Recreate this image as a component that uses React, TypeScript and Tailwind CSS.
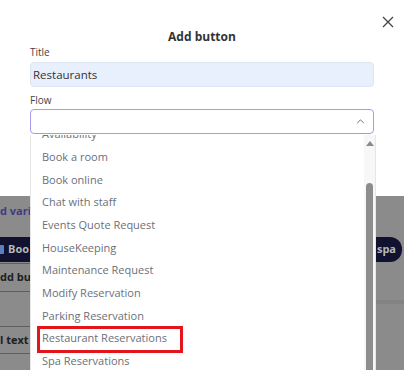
import React from "react";

const flows = [
  "Availability",
  "Book a room",
  "Book online",
  "Chat with staff",
  "Events Quote Request",
  "HouseKeeping",
  "Maintenance Request",
  "Modify Reservation",
  "Parking Reservation",
  "Restaurant Reservations",
  "Spa Reservations",
];

const App = () => {
  return (
    <div className="relative h-[370px] w-[404px] overflow-hidden bg-[#8b8b8b] font-['Open_Sans',sans-serif]">
      {/* modal */}
      <div className="relative h-[196px] bg-white px-[30px] pt-[29px]">
        <button className="absolute right-[10px] top-[16px] text-[#444]">
          <svg viewBox="0 0 12 12" className="h-[12px] w-[12px]" fill="none" stroke="currentColor" strokeWidth="1.3">
            <path d="M1 1l10 10M11 1L1 11" />
          </svg>
        </button>
        <h2 className="text-center text-[12px] font-bold leading-[16px] text-[#333]">Add button</h2>
        <div className="text-[10px] leading-[14px] text-[#444]">Title</div>
        <div className="mt-[3px] flex h-[25px] items-center rounded-[4px] border border-[#dde5f2] bg-[#e8f0fe] px-[2px] text-[11.5px] text-[#333]">
          Restaurants
        </div>
        <div className="mt-[6px] text-[10px] leading-[14px] text-[#444]">Flow</div>
        <div className="mt-[2px] flex h-[25px] items-center justify-end rounded-[4px] border border-[#a898f2] px-[8px]">
          <svg viewBox="0 0 10 6" className="h-[5px] w-[9px]" fill="none" stroke="#666" strokeWidth="1.1">
            <path d="M1 5l4-4 4 4" />
          </svg>
        </div>
      </div>

      {/* dimmed page behind the modal (only the edges peek out) */}
      <div className="flex flex-col">
        <div className="mt-[8px] whitespace-nowrap text-[11px] font-bold leading-[14px] text-[#3f3a86]">d varia</div>
        <div className="mt-[19px] flex h-[25px] w-[402px] items-center justify-between rounded-r-[12px] bg-[#101230] text-[11px] font-bold text-[#b8b8b8]">
          <div className="flex items-center gap-[4px]">
            <span className="h-[9px] w-[4px] rounded-r-[1px] bg-[#5b7fbf]" />
            <span>Boo</span>
          </div>
          <span className="pr-[6px]">spa</span>
        </div>
        <div className="mt-[1px] flex h-[29px] w-[80px] items-center border-y border-[#5f5f5f] text-[11px] font-bold text-[#1e1e1e]">
          <span className="whitespace-nowrap">dd bu</span>
        </div>
        <div className="ml-[376px] mt-[8px] h-[4px] w-[28px] bg-[#838383]" />
        <div className="mt-[22px] flex h-[28px] w-[30px] items-center border-y border-[#5f5f5f] text-[11px] font-bold text-[#1e1e1e]">
          <span className="whitespace-nowrap">l text</span>
        </div>
      </div>

      {/* open dropdown */}
      <div className="absolute bottom-0 left-[30px] top-[135px] flex w-[346px] overflow-hidden border-x border-[#e6e6e6] bg-white">
        <div className="flex-1">
          <div className="-mt-[11.8px]">
            {flows.map((f) => (
              <div key={f} className="relative flex h-[22.7px] items-center pl-[11px] text-[11px] text-[#6b7079]">
                {f}
                {f === "Restaurant Reservations" && (
                  <span className="absolute left-[6px] top-[-1px] h-[27px] w-[146px] border-[3px] border-[#e3161b]" />
                )}
              </div>
            ))}
          </div>
        </div>
        <div className="flex w-[11px] flex-col items-center bg-[#f7f7f7]">
          <svg viewBox="0 0 8 5" className="mt-[6px] h-[5px] w-[8px]">
            <path d="M0 5L4 0l4 5z" fill="#8a8a8a" />
          </svg>
          <div className="mt-[37px] w-[7px] flex-1 rounded-t-full bg-[#8d8d8d]" />
        </div>
      </div>
    </div>
  );
};

export default App;
